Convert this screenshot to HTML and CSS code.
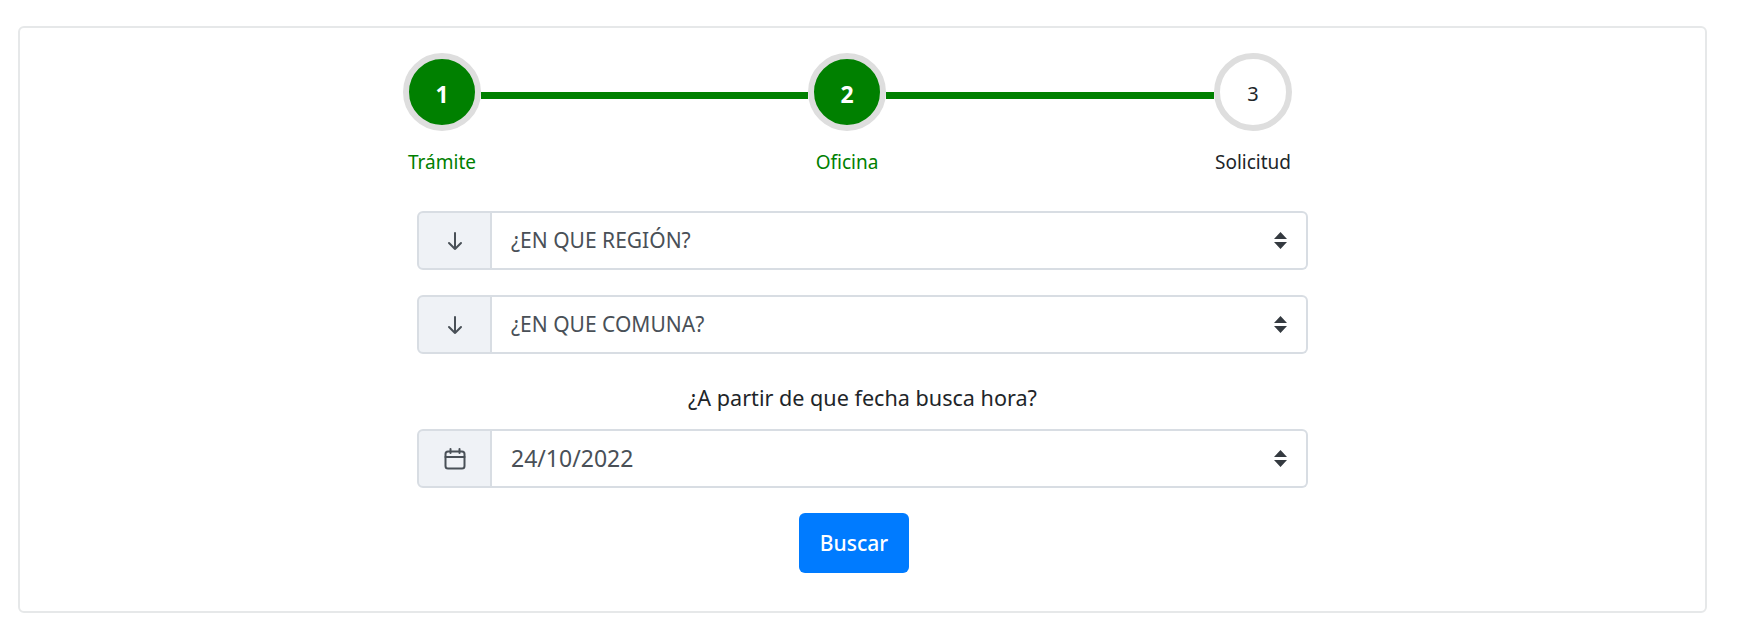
FILE: index.html
```html
<!DOCTYPE html>
<html lang="es">
<head>
    <meta charset="UTF-8">
    <meta name="viewport" content="width=device-width, initial-scale=1.0">
    <title>Buscar hora</title>
    <link rel="stylesheet" href="styles.css">
</head>
<body>
    <main class="card">
        <div class="stepper">
            <div class="step done">
                <div class="circle">1</div>
                <div class="step-label">Trámite</div>
            </div>
            <div class="step-line step-line-first"></div>
            <div class="step done">
                <div class="circle">2</div>
                <div class="step-label">Oficina</div>
            </div>
            <div class="step-line"></div>
            <div class="step">
                <div class="circle">3</div>
                <div class="step-label">Solicitud</div>
            </div>
        </div>

        <form class="search-form">
            <div class="input-group">
                <span class="input-icon">
                    <svg width="20" height="20" viewBox="0 0 20 20" fill="none" stroke="currentColor" stroke-width="2" stroke-linecap="round" stroke-linejoin="round"><path d="M10 2v16M4 12l6 6 6-6"/></svg>
                </span>
                <select class="form-select" name="region">
                    <option>¿EN QUE REGIÓN?</option>
                </select>
            </div>
            <div class="input-group">
                <span class="input-icon">
                    <svg width="20" height="20" viewBox="0 0 20 20" fill="none" stroke="currentColor" stroke-width="2" stroke-linecap="round" stroke-linejoin="round"><path d="M10 2v16M4 12l6 6 6-6"/></svg>
                </span>
                <select class="form-select" name="comuna">
                    <option>¿EN QUE COMUNA?</option>
                </select>
            </div>
            <label class="date-label" for="fecha">¿A partir de que fecha busca hora?</label>
            <div class="input-group">
                <span class="input-icon">
                    <svg width="22" height="22" viewBox="0 0 22 22" fill="none" stroke="currentColor" stroke-width="2" stroke-linecap="round" stroke-linejoin="round"><rect x="1.5" y="3.5" width="19" height="17" rx="2.5"/><path d="M1.5 9h19M6.5 1v4M15.5 1v4"/></svg>
                </span>
                <select class="form-select date-select" id="fecha" name="fecha">
                    <option>24/10/2022</option>
                </select>
            </div>
            <button type="submit" class="btn-search">Buscar</button>
        </form>
    </main>
</body>
</html>
```

FILE: styles.css
```css
body {
    margin: 0;
    font-family: "Noto Sans", Arial, sans-serif;
    color: #212529;
    background-color: #fff;
}
.card {
    margin: 26px 33px 21px 18px;
    height: 587px;
    box-sizing: border-box;
    padding: 25px 0 0;
    border: 2px solid #e6e8e9;
    border-radius: 6px;
}
.stepper {
    display: flex;
    width: 889px;
    margin-left: 383px;
}
.step {
    width: 78px;
    display: flex;
    flex-direction: column;
    align-items: center;
}
.circle {
    width: 78px;
    height: 78px;
    box-sizing: border-box;
    padding-top: 3px;
    display: flex;
    align-items: center;
    justify-content: center;
    border: 6px solid #dedede;
    border-radius: 50%;
    font-size: 20px;
}
.step.done .circle {
    background-color: #008000;
    color: #fff;
    font-weight: 700;
    font-size: 23px;
}
.step-label {
    margin-top: 18px;
    font-size: 19px;
    line-height: 26px;
    white-space: nowrap;
}
.step.done .step-label {
    color: #008000;
}
.step-line {
    flex: 1;
    height: 7px;
    margin-top: 39px;
    background-color: #008000;
}
.step-line-first {
    flex: 0 0 327px;
}
.search-form {
    width: 891px;
    margin: 36px 0 0 397px;
    display: flex;
    flex-direction: column;
    align-items: center;
}
.input-group {
    display: flex;
    width: 100%;
    height: 59px;
    margin-bottom: 25px;
}
.input-icon {
    width: 75px;
    display: flex;
    align-items: center;
    justify-content: center;
    box-sizing: border-box;
    background-color: #eff2f6;
    border: 2px solid #d8dde3;
    border-radius: 6px 0 0 6px;
    color: #495057;
}
.form-select {
    flex: 1;
    appearance: none;
    font-family: inherit;
    font-size: 21px;
    color: #495057;
    padding: 0 18px 2px 19px;
    border: 2px solid #d8dde3;
    border-left: 0;
    border-radius: 0 6px 6px 0;
    background: #fff url("data:image/svg+xml,%3csvg xmlns='http://www.w3.org/2000/svg' viewBox='0 0 13 17'%3e%3cpath fill='%23343a40' d='M6.5 0 13 7H0zM6.5 17 0 10h13z'/%3e%3c/svg%3e") no-repeat right 19px center / 13px 17px;
}
.date-select {
    font-size: 23px;
}
.date-label {
    margin: 4px 0 16px;
    font-size: 21.6px;
    line-height: 30px;
}
.btn-search {
    width: 110px;
    height: 60px;
    margin-right: 17px;
    font-family: inherit;
    font-size: 21px;
    font-weight: 500;
    color: #fff;
    background-color: #007bff;
    border: 0;
    border-radius: 6px;
    cursor: pointer;
}
```
